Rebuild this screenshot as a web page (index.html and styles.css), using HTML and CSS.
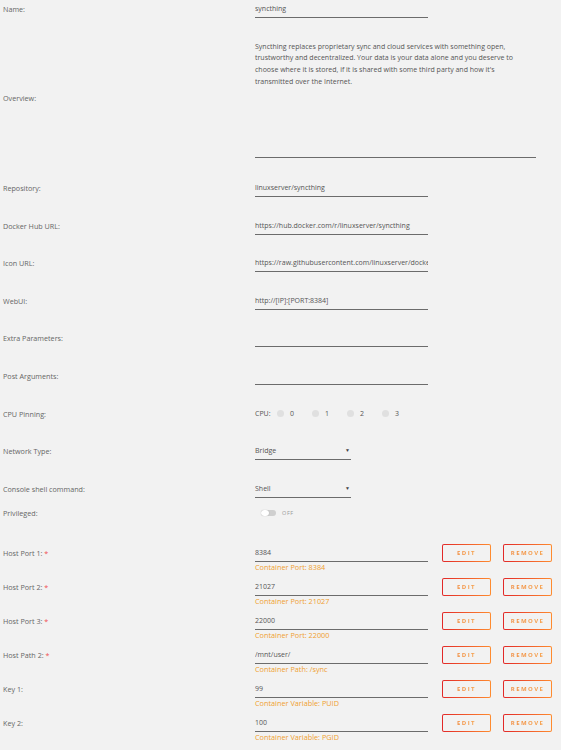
FILE: index.html
```html
<!DOCTYPE html>
<html>
<head>
    <title>Update Container</title>
    <link rel="stylesheet" href="styles.css">
</head>
<body>
<form class="form">
    <div class="row">
        <div class="label">Name:</div>
        <div class="field">syncthing</div>
    </div>
    <div class="row row-overview">
        <div class="label">Overview:</div>
        <div class="textarea">Syncthing replaces proprietary sync and cloud services with something open,<br>trustworthy and decentralized. Your data is your data alone and you deserve to<br>choose where it is stored, if it is shared with some third party and how it's<br>transmitted over the Internet.</div>
    </div>
    <div class="row">
        <div class="label">Repository:</div>
        <div class="field">linuxserver/syncthing</div>
    </div>
    <div class="row">
        <div class="label">Docker Hub URL:</div>
        <div class="field">https://hub.docker.com/r/linuxserver/syncthing</div>
    </div>
    <div class="row">
        <div class="label">Icon URL:</div>
        <div class="field">https://raw.githubusercontent.com/linuxserver/docker-templates/master/linuxserver.io/img/syncthing-icon.png</div>
    </div>
    <div class="row">
        <div class="label">WebUI:</div>
        <div class="field">http://[IP]:[PORT:8384]</div>
    </div>
    <div class="row">
        <div class="label">Extra Parameters:</div>
        <div class="field"></div>
    </div>
    <div class="row">
        <div class="label">Post Arguments:</div>
        <div class="field"></div>
    </div>
    <div class="row">
        <div class="label">CPU Pinning:</div>
        <div class="cpus">
            <span class="cpu-title">CPU:</span>
            <span class="cpu"><i class="dot"></i>0</span>
            <span class="cpu"><i class="dot"></i>1</span>
            <span class="cpu"><i class="dot"></i>2</span>
            <span class="cpu"><i class="dot"></i>3</span>
        </div>
    </div>
    <div class="row">
        <div class="label">Network Type:</div>
        <div class="field select">Bridge<span class="caret">&#9660;</span></div>
    </div>
    <div class="row row-console">
        <div class="label">Console shell command:</div>
        <div class="field select">Shell<span class="caret">&#9660;</span></div>
    </div>
    <div class="row row-privileged">
        <div class="label">Privileged:</div>
        <div class="switch"><span class="track"><span class="knob"></span></span><span class="switch-text">OFF</span></div>
    </div>

    <div class="row row-config">
        <div class="label">Host Port 1: <span class="req">*</span></div>
        <div class="config">
            <div class="field">8384</div>
            <div class="hint">Container Port: 8384</div>
        </div>
        <button type="button" class="btn btn-edit"><span>EDIT</span></button>
        <button type="button" class="btn"><span>REMOVE</span></button>
    </div>
    <div class="row row-config">
        <div class="label">Host Port 2: <span class="req">*</span></div>
        <div class="config">
            <div class="field">21027</div>
            <div class="hint">Container Port: 21027</div>
        </div>
        <button type="button" class="btn btn-edit"><span>EDIT</span></button>
        <button type="button" class="btn"><span>REMOVE</span></button>
    </div>
    <div class="row row-config">
        <div class="label">Host Port 3: <span class="req">*</span></div>
        <div class="config">
            <div class="field">22000</div>
            <div class="hint">Container Port: 22000</div>
        </div>
        <button type="button" class="btn btn-edit"><span>EDIT</span></button>
        <button type="button" class="btn"><span>REMOVE</span></button>
    </div>
    <div class="row row-config">
        <div class="label">Host Path 2: <span class="req">*</span></div>
        <div class="config">
            <div class="field">/mnt/user/</div>
            <div class="hint">Container Path: /sync</div>
        </div>
        <button type="button" class="btn btn-edit"><span>EDIT</span></button>
        <button type="button" class="btn"><span>REMOVE</span></button>
    </div>
    <div class="row row-config">
        <div class="label">Key 1:</div>
        <div class="config">
            <div class="field">99</div>
            <div class="hint">Container Variable: PUID</div>
        </div>
        <button type="button" class="btn btn-edit"><span>EDIT</span></button>
        <button type="button" class="btn"><span>REMOVE</span></button>
    </div>
    <div class="row row-config">
        <div class="label">Key 2:</div>
        <div class="config">
            <div class="field">100</div>
            <div class="hint">Container Variable: PGID</div>
        </div>
        <button type="button" class="btn btn-edit"><span>EDIT</span></button>
        <button type="button" class="btn"><span>REMOVE</span></button>
    </div>
</form>
</body>
</html>
```

FILE: styles.css
```css
body {
    margin: 0;
    background-color: #f2f2f2;
    color: #606060;
    font-family: "Open Sans", "Liberation Sans", sans-serif;
    font-size: 7px;
    overflow: hidden;
}
.form {
    padding: 0 0 0 3px;
}
.row {
    display: flex;
    align-items: center;
    margin-bottom: 19.6px;
}
.label {
    width: 252px;
    flex: none;
    color: #666;
    font-size: 7.2px;
}
.req {
    color: #f05050;
}
.field {
    position: relative;
    width: 173px;
    height: 17px;
    line-height: 17px;
    border-bottom: 1px solid #6c6c6c;
    color: #555;
    white-space: nowrap;
    overflow: hidden;
    box-sizing: content-box;
}
.row-overview {
    margin-bottom: 21.4px;
}
.textarea {
    width: 281px;
    height: 116px;
    padding-top: 3px;
    line-height: 11.7px;
    border-bottom: 1px solid #6c6c6c;
    color: #555;
}
.cpus {
    display: flex;
    align-items: center;
    height: 18px;
    color: #555;
}
.cpu-title {
    width: 22px;
}
.cpu {
    display: flex;
    align-items: center;
    width: 35px;
}
.dot {
    width: 7px;
    height: 7px;
    border-radius: 50%;
    background-color: #e0e0e0;
    margin-right: 6px;
}
.select {
    width: 96px;
}
.caret {
    position: absolute;
    right: 1px;
    top: 0;
    font-size: 5px;
    color: #444;
}
.row-console {
    margin-bottom: 6.2px;
}
.switch {
    display: flex;
    align-items: center;
    height: 18px;
    padding-left: 6px;
}
.track {
    display: flex;
    width: 15px;
    height: 6px;
    border-radius: 3px;
    background-color: #cfcfcf;
}
.knob {
    width: 8px;
    height: 6px;
    border-radius: 3px;
    background-color: #fff;
    box-shadow: 0 0 1px rgba(0, 0, 0, 0.3);
}
.switch-text {
    margin-left: 6px;
    font-size: 5.5px;
    letter-spacing: 0.6px;
    color: #999;
}
.row-privileged {
    margin-bottom: 22px;
}
.row-config {
    align-items: flex-start;
    margin-bottom: 6px;
}
.row-config .label {
    line-height: 18px;
}
.config {
    width: 173px;
}
.hint {
    height: 10px;
    line-height: 10px;
    font-size: 7.3px;
    color: #f0a030;
}
.btn {
    width: 49px;
    height: 18px;
    margin: 0 0 0 12px;
    padding: 0;
    border: 1px solid transparent;
    border-radius: 2px;
    background: linear-gradient(#f2f2f2, #f2f2f2) padding-box, linear-gradient(90deg, #e22828, #ff8c2f) border-box;
    font-family: inherit;
    font-size: 6px;
    font-weight: 700;
    letter-spacing: 1.4px;
    cursor: pointer;
}
.btn-edit {
    margin-left: 14px;
}
.btn span {
    background: linear-gradient(90deg, #f28a3a, #f6a04a);
    -webkit-background-clip: text;
    background-clip: text;
    color: transparent;
}
```
